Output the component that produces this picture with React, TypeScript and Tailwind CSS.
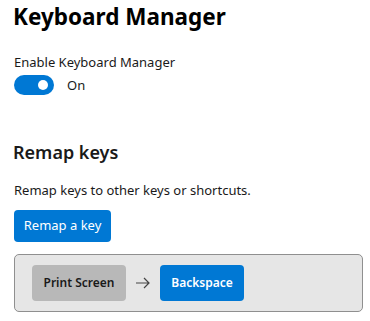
export default function App() {
  return (
    <div
      className="w-[370px] h-[321px] bg-white px-[13px] text-[#1a1a1a]"
      style={{ fontFamily: '"Segoe UI", "Noto Sans", sans-serif' }}
    >
      <h1 className="pt-[1px] text-[22.5px] leading-[32px] font-bold text-black">Keyboard Manager</h1>

      <div className="mt-[19px] text-[13px] leading-[20px] pl-[1px]">Enable Keyboard Manager</div>
      <div className="mt-[3px] flex items-center gap-[13px] pl-[1px]">
        <button className="relative w-[40px] h-[20px] rounded-full bg-[#0078d4]">
          <span className="absolute right-[6px] top-[5px] w-[10px] h-[10px] rounded-full bg-white" />
        </button>
        <span className="text-[13px] leading-[20px]">On</span>
      </div>

      <h2 className="mt-[43px] text-[18px] leading-[28px] font-semibold">Remap keys</h2>

      <p className="mt-[14px] text-[13px] leading-[20px] pl-[1px]">Remap keys to other keys or shortcuts.</p>

      <button className="mt-[10px] ml-[1px] w-[97px] h-[32px] rounded-[4px] bg-[#0078d4] text-white text-[13px]">
        Remap a key
      </button>

      <div className="mt-[12px] ml-[1px] w-[349px] h-[58px] rounded-[5px] border border-[#8f8f8f] bg-[#e6e6e6] flex items-center pl-[17px]">
        <div className="w-[94px] h-[36px] rounded-[4px] bg-[#b8b8b8] flex items-center justify-center text-[12px] font-semibold text-[#1a1a1a]">
          Print Screen
        </div>
        <svg width="34" height="36" viewBox="0 0 34 36" className="text-[#444]">
          <path d="M10 18h13M18 13l5 5-5 5" fill="none" stroke="currentColor" strokeWidth="1.2" />
        </svg>
        <div className="w-[84px] h-[36px] rounded-[4px] bg-[#0078d4] flex items-center justify-center text-[12px] font-semibold text-white">
          Backspace
        </div>
      </div>
    </div>
  )
}
